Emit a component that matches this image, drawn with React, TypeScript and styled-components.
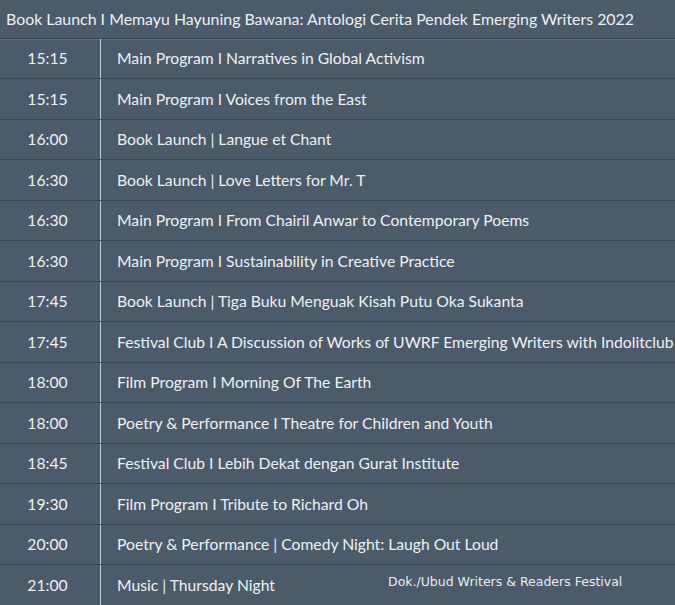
import React from 'react';
import styled, { createGlobalStyle } from 'styled-components';

const Styles = createGlobalStyle`
  html, body {
    margin: 0;
    padding: 0;
    background: #4b5b6a;
  }
`;

const Page = styled.div`
  position: relative;
  width: 675px;
  height: 605px;
  overflow: hidden;
  background: #4b5b6a;
  font-family: Lato, 'Open Sans', sans-serif;
  font-size: 15.7px;
  color: #eef1f3;
`;

const HeadRow = styled.div`
  height: 37.5px;
  display: flex;
  align-items: center;
  padding-left: 6px;
  white-space: nowrap;
  font-size: 15.9px;
  border-bottom: 1px solid #3a4754;
  box-shadow: 0 1px 0 #5d6c7a;
`;

const Row = styled.div`
  display: grid;
  grid-template-columns: 101px 1fr;
  height: 39.5px;
  border-bottom: 1px solid #3a4754;
`;

const Time = styled.div`
  display: flex;
  align-items: center;
  justify-content: center;
  padding-right: 5px;
  border-right: 1px solid #c9d0d7;
`;

const Title = styled.div`
  display: flex;
  align-items: center;
  padding-left: 16px;
  white-space: nowrap;
  overflow: hidden;
`;

const Credit = styled.div`
  position: absolute;
  left: 388px;
  top: 574px;
  font-family: 'DejaVu Sans', sans-serif;
  font-size: 12.5px;
  color: #e8ecef;
`;

const rows: [string, string][] = [
  ['15:15', 'Main Program I Narratives in Global Activism'],
  ['15:15', 'Main Program I Voices from the East'],
  ['16:00', 'Book Launch | Langue et Chant'],
  ['16:30', 'Book Launch | Love Letters for Mr. T'],
  ['16:30', 'Main Program I From Chairil Anwar to Contemporary Poems'],
  ['16:30', 'Main Program I Sustainability in Creative Practice'],
  ['17:45', 'Book Launch | Tiga Buku Menguak Kisah Putu Oka Sukanta'],
  ['17:45', 'Festival Club I A Discussion of Works of UWRF Emerging Writers with Indolitclub'],
  ['18:00', 'Film Program I Morning Of The Earth'],
  ['18:00', 'Poetry & Performance I Theatre for Children and Youth'],
  ['18:45', 'Festival Club I Lebih Dekat dengan Gurat Institute'],
  ['19:30', 'Film Program I Tribute to Richard Oh'],
  ['20:00', 'Poetry & Performance | Comedy Night: Laugh Out Loud'],
  ['21:00', 'Music | Thursday Night'],
];

function App() {
  return (
    <>
      <Styles />
      <Page>
        <HeadRow>
          Book Launch I Memayu Hayuning Bawana: Antologi Cerita Pendek Emerging Writers 2022
        </HeadRow>
        {rows.map(([time, title], i) => (
          <Row key={`row-${i}`}>
            <Time>{time}</Time>
            <Title>{title}</Title>
          </Row>
        ))}
        <Credit>Dok./Ubud Writers &amp; Readers Festival</Credit>
      </Page>
    </>
  );
}

export default App;
